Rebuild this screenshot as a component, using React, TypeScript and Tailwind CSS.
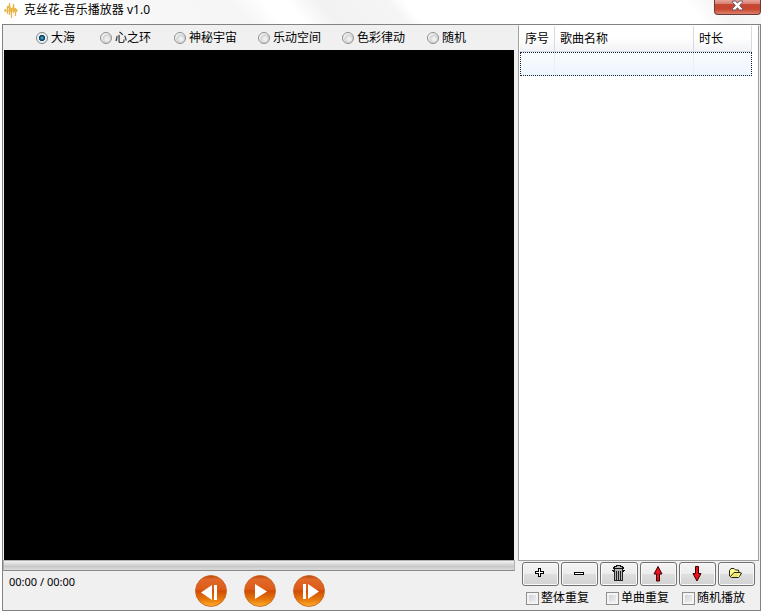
import { useState } from "react";

const visuals = [
  { name: "大海", width: "w-16" },
  { name: "心之环", width: "w-[74px]" },
  { name: "神秘宇宙", width: "w-[84px]" },
  { name: "乐动空间", width: "w-[84px]" },
  { name: "色彩律动", width: "w-[85px]" },
  { name: "随机", width: "w-12" },
];

const modes = [
  { name: "整体重复", width: "w-20" },
  { name: "单曲重复", width: "w-[76px]" },
  { name: "随机播放", width: "w-16" },
];

const LogoIcon = () => (
  <svg width="14" height="18" viewBox="0 0 14 18" fill="none" aria-hidden="true">
    <path d="M0 9.500h13.500" stroke="#f3cf85" strokeWidth="1.500" />
    <path d="M1.500 8v3M3.500 5v8M5.500 2v12M7.500 7v10M9.500 3v9M11.500 7v8M12.500 8v3" stroke="#eab548" strokeWidth="1.300" />
    <path d="M3 8.500l2.500-4 1.500 6 1-1 1.500-4 1.500 5" stroke="#eab548" strokeWidth="1.300" />
  </svg>
);

const CloseIcon = () => (
  <svg width="13" height="11" viewBox="0 0 13 11" aria-hidden="true">
    <path
      d="M1.500 1h3.200l1.800 2.200L8.300 1h3.200v1.200L8.600 5.400l2.900 3.200v1.400H8.300L6.500 7.700 4.700 10H1.500V8.600l2.900-3.200-2.900-3.200z"
      fill="#fff"
      stroke="#6b5a66"
      strokeWidth="1"
    />
  </svg>
);

const PlusIcon = () => (
  <svg width="11" height="12" viewBox="0 0 11 12" shapeRendering="crispEdges" aria-hidden="true">
    <path d="M3.500.5h2v3h3v2h-3v3h-2v-3h-3v-2h3z" fill="#fff" stroke="#000" />
  </svg>
);

const MinusIcon = () => (
  <svg width="11" height="12" viewBox="0 0 11 12" shapeRendering="crispEdges" aria-hidden="true">
    <path d="M.5 4.500h9v2h-9z" fill="#fff" stroke="#000" />
  </svg>
);

const TrashIcon = () => (
  <svg width="13" height="18" viewBox="0 0 13 18" shapeRendering="crispEdges" aria-hidden="true">
    <path d="M4 0h5v1h2v1h1v2H1V2h1V1h2z" fill="#111" />
    <path d="M5 1h3v1H5zM3 2h7v1H3z" fill="#bbb" />
    <path d="M2 4h9v12H2z" fill="#b4b4b4" />
    <path d="M2.500 4v12M10.500 4v12M4.500 6v9M6.500 6v9M8.500 6v9M3 15.500h7" stroke="#222" fill="none" />
    <path d="M0 5h2v2H1V6H0zM13 5h-2v2h1V6h1z" fill="#111" />
  </svg>
);

const UpIcon = () => (
  <svg width="10" height="18" viewBox="0 0 10 18" aria-hidden="true">
    <path d="M5 1.500L9 9H6.500v7h-3V9H1z" fill="#f0101c" stroke="#300" />
  </svg>
);

const DownIcon = () => (
  <svg width="10" height="18" viewBox="0 0 10 18" aria-hidden="true">
    <path d="M5 16L9 8.500H6.500v-7h-3v7H1z" fill="#f0101c" stroke="#300" />
  </svg>
);

const FolderIcon = () => (
  <svg width="14" height="12" viewBox="0 0 14 12" aria-hidden="true">
    <path d="M.5 8V2.500l1.500-2h3L6.500 2h3l.5 2.500 2.500.5-2 3.500-1 1h-7z" fill="#ffff80" stroke="#222" />
    <path d="M1.500 8.500L5 4.500h5.500" fill="none" stroke="#222" />
    <path d="M2.500 9L5.500 5.500h5L8 9z" fill="#eee66a" />
  </svg>
);

const tools = [
  { name: "添加", icon: <PlusIcon /> },
  { name: "移除", icon: <MinusIcon /> },
  { name: "清空", icon: <TrashIcon /> },
  { name: "上移", icon: <UpIcon /> },
  { name: "下移", icon: <DownIcon /> },
  { name: "打开", icon: <FolderIcon /> },
];

const RoundButton = ({ label, children }: { label: string; children: React.ReactNode }) => (
  <button type="button" aria-label={label} className="size-8 rounded-full">
    <svg width="32" height="32" viewBox="0 0 32 32" aria-hidden="true">
      <defs>
        <linearGradient id="orb" x1="0" y1="0" x2="0" y2="1">
          <stop offset="0" stopColor="#b84408" />
          <stop offset=".12" stopColor="#e0692a" />
          <stop offset=".44" stopColor="#dd5c18" />
          <stop offset=".5" stopColor="#d04c04" />
          <stop offset=".78" stopColor="#e67a0c" />
          <stop offset="1" stopColor="#ffb02c" />
        </linearGradient>
      </defs>
      <circle cx="16" cy="16" r="15.500" fill="url(#orb)" stroke="#c8601c" strokeWidth=".8" />
      <g fill="#fff">{children}</g>
    </svg>
  </button>
);

export default function App() {
  const [visual, setVisual] = useState("大海");
  const [position, setPosition] = useState(0);

  return (
    <div className="flex h-screen flex-col bg-white px-[2px] pb-[2px] font-['Liberation_Sans','Noto_Sans_CJK_SC',sans-serif] text-xs text-black">
      {/* Title bar */}
      <header className="flex h-6 shrink-0 items-start justify-between bg-[linear-gradient(50deg,#fff_0%,#fff_12%,#f7f7f7_20%,#f6f6f6_32%,#fff_36%,#fff_39%,#f2f2f2_43%,#f5f5f5_52%,#fff_54%,#fff_90%,#f5f5f5_94%,#f7f7f7_100%)]">
        <div className="flex h-5 items-center gap-[6px] pl-[2px]">
          <LogoIcon />
          <h1 className="font-['Noto_Sans','Noto_Sans_CJK_SC',sans-serif] text-xs leading-5">克丝花-音乐播放器 v1.0</h1>
        </div>
        <button
          type="button"
          aria-label="关闭"
          className="flex h-[15px] w-[47px] items-start justify-center rounded-b border border-t-0 border-[#6b3a38] bg-[linear-gradient(#e9a79c_0%,#d98173_25%,#c64935_32%,#c9452f_65%,#dc8068_100%)]"
        >
          <CloseIcon />
        </button>
      </header>

      <div className="flex min-h-0 flex-1 border border-[#828282] bg-[#f0f0f0]">
        {/* Visualizer and transport */}
        <main className="flex min-w-0 flex-1 flex-col">
          <div className="flex h-[25px] shrink-0 items-center pl-[33px]">
            {visuals.map((v) => (
              <label key={v.name} className={`flex items-center gap-[3px] whitespace-nowrap ${v.width}`}>
                <input
                  type="radio"
                  name="visual"
                  checked={visual === v.name}
                  onChange={() => setVisual(v.name)}
                  className="size-3 shrink-0 appearance-none rounded-full border border-[#8e8f8f] bg-[radial-gradient(circle_at_60%_60%,#f0f0f0_15%,#cfd1d3_50%,#f4f4f4_60%)] checked:border-[#7c868b] checked:bg-[radial-gradient(circle_at_50%_50%,#6cc4de_0%,#1c6f92_20%,#0b3a56_40%,#eef2f4_48%)]"
                />
                {v.name}
              </label>
            ))}
          </div>
          <div className="mx-px min-h-0 flex-1 bg-black" />
          <input
            type="range"
            aria-label="播放进度"
            min={0}
            max={100}
            value={position}
            onChange={(e) => setPosition(Number(e.target.value))}
            className="h-[11px] w-full shrink-0 appearance-none border border-[#b0b0b0] border-b-[#8a8a8a] bg-[linear-gradient(#f4f4f4,#dadada_35%,#c8c8c8_60%,#dcdcdc)] [&::-webkit-slider-thumb]:w-0 [&::-webkit-slider-thumb]:appearance-none"
          />
          <div className="flex h-[39px] shrink-0 items-start pl-[6px]">
            <time className="w-[186px] pt-[3px] font-['Noto_Sans',sans-serif] text-[11px] leading-4">00:00 / 00:00</time>
            <div className="flex gap-[17px] pt-1">
              <RoundButton label="上一首">
                <path d="M6 17.500l11-7.500v15zM19 10h3v15h-3z" />
              </RoundButton>
              <RoundButton label="播放">
                <path d="M11 9l12 7.500L11 24z" />
              </RoundButton>
              <RoundButton label="下一首">
                <path d="M10 9h3v15h-3zM15 9l11 7.500L15 24z" />
              </RoundButton>
            </div>
          </div>
        </main>

        {/* Playlist */}
        <aside className="flex w-[245px] shrink-0 flex-col pl-[3px]">
          <div className="mr-px min-h-0 flex-1 border border-[#a0a0a0] border-t-white bg-white pl-px">
            <table className="w-[232px] table-fixed border-separate border-spacing-0 text-left">
              <colgroup>
                <col className="w-[35px]" />
                <col />
                <col className="w-[58px]" />
              </colgroup>
              <thead>
                <tr className="h-[26px] bg-[linear-gradient(#fff_45%,#f1f2f4)]">
                  <th className="border-r border-b border-[#d5dbe2] pl-[5px] font-normal whitespace-nowrap">序号</th>
                  <th className="border-r border-b border-[#d5dbe2] pl-[5px] font-normal">歌曲名称</th>
                  <th className="border-r border-b border-[#d5dbe2] pl-[5px] font-normal">时长</th>
                </tr>
              </thead>
              <tbody>
                <tr className="h-6 bg-[linear-gradient(#fafcfe,#ecf5fc)] outline-1 -outline-offset-1 outline-dotted outline-[#10243c]">
                  <td className="border-r border-[#e8f0f7]" />
                  <td className="border-r border-[#e8f0f7]" />
                  <td />
                </tr>
              </tbody>
            </table>
          </div>
          <div className="flex gap-[2px] pt-px pr-[5px] pl-1">
            {tools.map((t) => (
              <button
                key={t.name}
                type="button"
                aria-label={t.name}
                className="flex h-6 flex-1 items-center justify-center rounded-[3px] border border-[#707070] bg-[linear-gradient(#f4f4f4_0%,#ececec_48%,#dedede_52%,#d2d2d2_100%)] shadow-[inset_0_0_0_1px_#fafafa]"
              >
                {t.icon}
              </button>
            ))}
          </div>
          <div className="flex h-6 items-center pl-2">
            {modes.map((m) => (
              <label key={m.name} className={`flex items-center gap-[2px] whitespace-nowrap ${m.width}`}>
                <input
                  type="checkbox"
                  className="size-[13px] shrink-0 appearance-none border border-[#8e8f8f] bg-[linear-gradient(135deg,#c9cdd2,#f6f6f6)] shadow-[inset_0_0_0_2px_#f4f4f4] checked:bg-[#2a6f92]"
                />
                {m.name}
              </label>
            ))}
          </div>
        </aside>
      </div>
    </div>
  );
}
